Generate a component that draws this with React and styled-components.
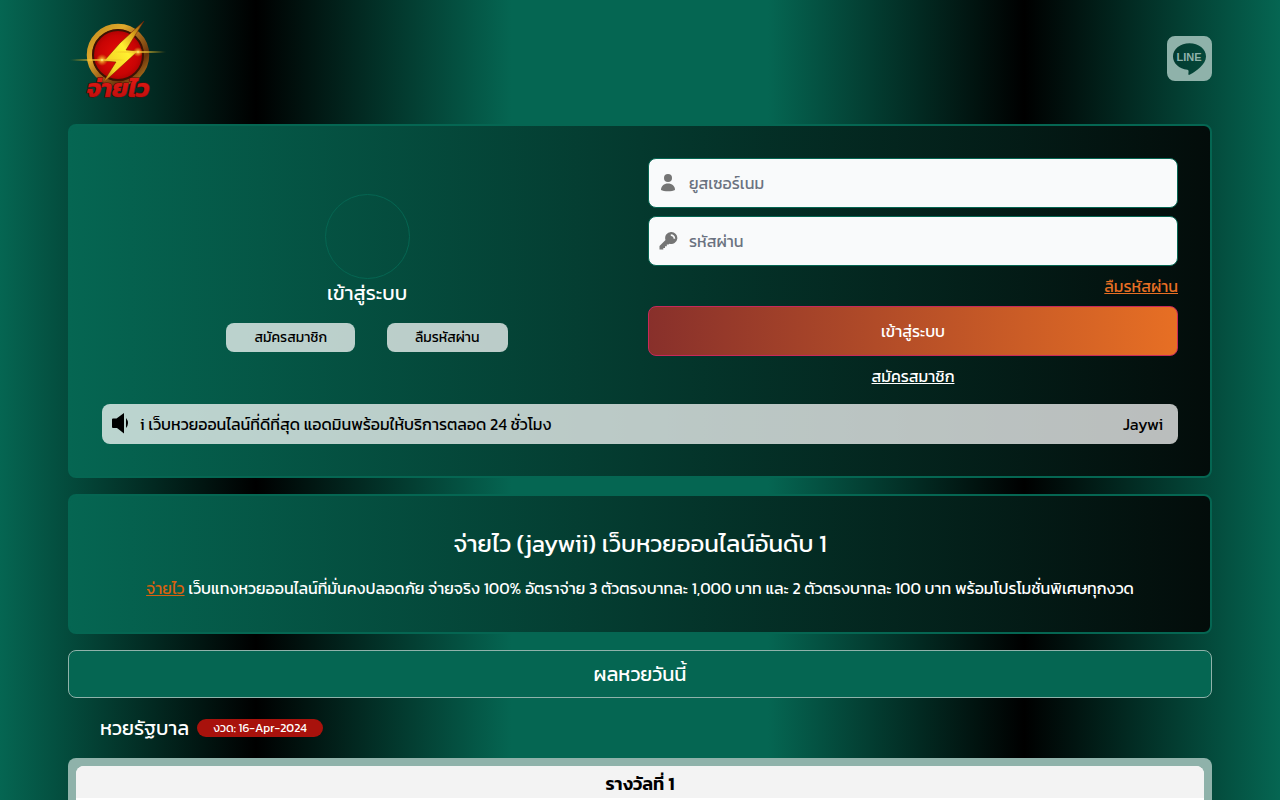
import styled, { createGlobalStyle } from "styled-components";

const GREEN = "#056652";

const App = () => {
  return (
    <>
      <GlobalStyle />
      <Container>
        <Header>
          <LogoLink href="#" aria-label="จ่ายไว">
            <Logo />
          </LogoLink>
          <LineLink href="#" aria-label="Line">
            <LineIcon />
          </LineLink>
        </Header>

        <Card>
          <LoginGrid>
            <Profile>
              <Avatar />
              <ProfileName>เข้าสู่ระบบ</ProfileName>
              <ProfileActions>
                <SmallButton type="button">สมัครสมาชิก</SmallButton>
                <SmallButton type="button">ลืมรหัสผ่าน</SmallButton>
              </ProfileActions>
            </Profile>

            <LoginForm onSubmit={(e) => e.preventDefault()}>
              <Field>
                <UserIcon />
                <Input
                  type="text"
                  aria-label="ยูสเซอร์เนม"
                  placeholder="ยูสเซอร์เนม"
                />
              </Field>
              <Field>
                <KeyIcon />
                <Input
                  type="password"
                  aria-label="รหัสผ่าน"
                  placeholder="รหัสผ่าน"
                />
              </Field>
              <ForgotLink href="#">ลืมรหัสผ่าน</ForgotLink>
              <SubmitButton type="submit">เข้าสู่ระบบ</SubmitButton>
              <RegisterLink href="#">สมัครสมาชิก</RegisterLink>
            </LoginForm>
          </LoginGrid>

          <NewsBar>
            <SpeakerIcon />
            <NewsText>
              <span>i เว็บหวยออนไลน์ที่ดีที่สุด แอดมินพร้อมให้บริการตลอด 24 ชั่วโมง</span>
              <span>Jaywi</span>
            </NewsText>
          </NewsBar>
        </Card>

        <Card>
          <IntroTitle>จ่ายไว (jaywii) เว็บหวยออนไลน์อันดับ 1</IntroTitle>
          <IntroText>
            <a href="#">จ่ายไว</a> เว็บแทงหวยออนไลน์ที่มั่นคงปลอดภัย จ่ายจริง 100%
            อัตราจ่าย 3 ตัวตรงบาทละ 1,000 บาท และ 2 ตัวตรงบาทละ 100 บาท
            พร้อมโปรโมชั่นพิเศษทุกงวด
          </IntroText>
        </Card>

        <ResultHeading>ผลหวยวันนี้</ResultHeading>
        <LottoHead>
          <LottoName>หวยรัฐบาล</LottoName>
          <DateBadge>งวด: 16-Apr-2024</DateBadge>
        </LottoHead>
        <ResultPanel>
          <ResultTable>
            <thead>
              <tr>
                <th scope="col">รางวัลที่ 1</th>
              </tr>
            </thead>
            <tbody>
              <tr>
                <td></td>
              </tr>
            </tbody>
          </ResultTable>
        </ResultPanel>
      </Container>
    </>
  );
};

const Logo = () => (
  <svg width="100" height="84" viewBox="0 -2 100 84" aria-hidden="true">
    <defs>
      <linearGradient id="ring" x1="0" y1="0" x2="1" y2="1">
        <stop offset="0" stopColor="#c08a1c" />
        <stop offset="0.3" stopColor="#e0aa2c" />
        <stop offset="0.5" stopColor="#a86c1c" />
        <stop offset="0.75" stopColor="#6a340c" />
        <stop offset="1" stopColor="#c98a20" />
      </linearGradient>
      <radialGradient id="disc">
        <stop offset="0" stopColor="#e80c08" />
        <stop offset="0.7" stopColor="#c80404" />
        <stop offset="1" stopColor="#9c0202" />
      </radialGradient>
      <linearGradient id="bolt" x1="1" y1="0" x2="0" y2="1">
        <stop offset="0" stopColor="#7a4a10" />
        <stop offset="0.25" stopColor="#e0a81c" />
        <stop offset="0.45" stopColor="#fff030" />
        <stop offset="0.75" stopColor="#f4d424" />
        <stop offset="1" stopColor="#a85c10" />
      </linearGradient>
      <radialGradient id="flare">
        <stop offset="0" stopColor="#fffbd0" />
        <stop offset="0.2" stopColor="#ffd840" stopOpacity="0.8" />
        <stop offset="1" stopColor="#e0a010" stopOpacity="0" />
      </radialGradient>
      <linearGradient id="word" x1="0" y1="0" x2="0" y2="1">
        <stop offset="0" stopColor="#f02018" />
        <stop offset="1" stopColor="#b00808" />
      </linearGradient>
    </defs>
    <circle cx="50" cy="37" r="28" fill="url(#disc)" />
    <circle cx="50" cy="37" r="28.500" fill="none" stroke="url(#ring)" strokeWidth="5.500" />
    <circle cx="50" cy="37" r="25" fill="none" stroke="#3c1404" strokeWidth="2" />
    <path
      d="M76 3L52 25L36 43L48 44L34 66L70 33L58 32Z"
      fill="url(#bolt)"
      stroke="#7a1804"
      strokeWidth="0.500"
    />
    <ellipse cx="30" cy="42" rx="30" ry="1.500" fill="url(#flare)" />
    <ellipse cx="72" cy="34" rx="28" ry="1.500" fill="url(#flare)" />
    <circle cx="34" cy="42" r="6" fill="url(#flare)" />
    <circle cx="70" cy="34" r="5" fill="url(#flare)" />
    <text
      x="50"
      y="79"
      textAnchor="middle"
      fontSize="25"
      fontWeight="700"
      fontStyle="italic"
      fill="url(#word)"
      stroke="#5a0404"
      strokeWidth="1"
      paintOrder="stroke"
    >
      จ่ายไว
    </text>
  </svg>
);

const LineIcon = () => (
  <svg width="45" height="45" viewBox="0 0 45 45" fill="#8fb2aa" aria-hidden="true">
    <path
      fillRule="evenodd"
      d="M8 0H37A8 8 0 0 1 45 8V37A8 8 0 0 1 37 45H8A8 8 0 0 1 0 37V8A8 8 0 0 1 8 0ZM22.500 7.300C13.400 7.300 6 13 6 20.500C6 27.300 12 32.800 20.500 33.800C21.800 34.200 21.700 35 21.400 37.500C21.200 39 21.800 39.200 23 38.600C29 35.300 39 28.500 39 20.500C39 13 31.600 7.300 22.500 7.300Z"
    />
    <LineWord x="22" y="25" textAnchor="middle">
      LINE
    </LineWord>
  </svg>
);

const UserIcon = () => (
  <FieldIcon viewBox="0 0 20 20" aria-hidden="true">
    <circle cx="10" cy="5" r="4" />
    <path d="M3 17c0-4 3-6.500 7-6.500s7 2.500 7 6.500c-1.500.8-4 1.300-7 1.300s-5.500-.5-7-1.300Z" />
  </FieldIcon>
);

const KeyIcon = () => (
  <FieldIcon viewBox="0 0 20 20" aria-hidden="true">
    <path
      fillRule="evenodd"
      d="M13 1a6 6 0 1 1-1.500 11.700L10.500 13.500H8.800V15.300H7V17H5.300V18.500H1.500V15L7.500 9A6 6 0 0 1 13 1Zm-.2 2.200v1.700a2.500 2.500 0 0 1 2.700 2.800h1.700c.1-2.700-1.800-4.500-4.400-4.500Z"
    />
  </FieldIcon>
);

const SpeakerIcon = () => (
  <SpeakerSvg viewBox="0 1 20 20" aria-hidden="true">
    <path d="M3 5.500H6.500L14 0V20.500L7 15H3Q2 15 2 14V6.500Q2 5.500 3 5.500Z" />
    <path d="M16 5Q20 10 16 15Z" />
  </SpeakerSvg>
);

const GlobalStyle = createGlobalStyle`
  * {
    box-sizing: border-box;
  }

  body {
    margin: 0;
    min-height: 100vh;
    overflow-x: hidden;
    color: #fff;
    font-family: Kanit, "Noto Sans Thai", "Noto Sans", sans-serif;
    font-size: 16px;
    line-height: 24px;
    background: linear-gradient(
      90deg,
      ${GREEN} 0%,
      #000 20%,
      ${GREEN} 40%,
      ${GREEN} 60%,
      #000 80%,
      ${GREEN} 100%
    );
  }

  button,
  input {
    font: inherit;
  }
`;

const Container = styled.main`
  width: calc(100% - 32px);
  max-width: 1144px;
  margin: 0 auto;
`;

const Header = styled.header`
  display: flex;
  align-items: center;
  justify-content: space-between;
  padding: 16px 0 24px;
`;

const LogoLink = styled.a`
  display: block;

  svg {
    display: block;
    overflow: visible;
  }
`;

const LineLink = styled.a`
  display: flex;
`;

const LineWord = styled.text`
  font-family: "Liberation Sans", Arial, sans-serif;
  font-size: 11px;
  font-weight: 700;
`;

const Card = styled.section`
  margin-bottom: 16px;
  padding: 32px;
  border: 2px solid ${GREEN};
  border-radius: 8px;
  background: linear-gradient(90deg, ${GREEN} 0%, #030c0a 100%) border-box;
`;

const LoginGrid = styled.div`
  display: grid;
  grid-template-columns: 1fr 1fr;
  gap: 16px;
`;

const Profile = styled.div`
  display: flex;
  flex-direction: column;
  align-items: center;
  justify-content: center;
`;

const Avatar = styled.div`
  width: 85px;
  height: 85px;
  border: 1px solid ${GREEN};
  border-radius: 50%;
`;

const ProfileName = styled.div`
  font-size: 20px;
  line-height: 28px;
`;

const ProfileActions = styled.div`
  display: flex;
  gap: 32px;
  margin-top: 16px;
`;

const SmallButton = styled.button`
  padding: 4px 28px;
  border: 0;
  border-radius: 8px;
  color: #000;
  background: rgba(255, 255, 255, 0.73);
  font-size: 14px;
  line-height: 21px;
`;

const LoginForm = styled.form`
  display: flex;
  flex-direction: column;
  gap: 8px;
`;

const Field = styled.div`
  display: flex;
  align-items: center;
  height: 50px;
  padding: 0 9px;
  border: 1px solid ${GREEN};
  border-radius: 8px;
  background: #f9fafb;
`;

const FieldIcon = styled.svg`
  flex: none;
  width: 20px;
  height: 20px;
  margin-right: 11px;
  fill: #757575;
`;

const Input = styled.input`
  flex: 1;
  min-width: 0;
  padding: 0;
  border: 0;
  outline: 0;
  color: #111827;
  background: transparent;

  &::placeholder {
    color: #6b7280;
    opacity: 1;
  }
`;

const ForgotLink = styled.a`
  align-self: flex-end;
  color: #e76f24;
`;

const SubmitButton = styled.button`
  height: 50px;
  border: 1px solid #c8285a;
  border-radius: 8px;
  color: #fff;
  background: linear-gradient(90deg, #88302b, #e76f24);
`;

const RegisterLink = styled.a`
  align-self: center;
  color: #fff;
`;

const NewsBar = styled.div`
  display: flex;
  align-items: center;
  height: 40px;
  margin-top: 16px;
  padding: 0 15px 0 8px;
  border-radius: 8px;
  color: #000;
  background: rgba(255, 255, 255, 0.73);
`;

const SpeakerSvg = styled.svg`
  flex: none;
  width: 20px;
  height: 20px;
  margin-right: 10px;
  overflow: visible;
`;

const NewsText = styled.div`
  display: flex;
  flex: 1;
  justify-content: space-between;
  overflow: hidden;
  white-space: nowrap;
`;

const IntroTitle = styled.h1`
  margin: 0 0 16px;
  font-size: 24px;
  font-weight: 400;
  line-height: 32px;
  text-align: center;
`;

const IntroText = styled.p`
  margin: 0;
  text-align: center;

  a {
    color: #d9610f;
  }
`;

const ResultHeading = styled.h2`
  margin: 0;
  padding: 9px;
  border: 1px solid #8fb2aa;
  border-radius: 8px;
  background: ${GREEN};
  font-size: 20px;
  font-weight: 400;
  line-height: 28px;
  text-align: center;
`;

const LottoHead = styled.div`
  display: flex;
  align-items: center;
  gap: 8px;
  padding: 16px 32px;
`;

const LottoName = styled.h3`
  margin: 0;
  font-size: 20px;
  font-weight: 400;
  line-height: 28px;
`;

const DateBadge = styled.span`
  padding: 0 16px;
  border-radius: 9px;
  background: #a8120c;
  font-size: 12px;
  line-height: 18px;
`;

const ResultPanel = styled.div`
  padding: 8px;
  border-radius: 8px;
  background: #8fb2aa;
`;

const ResultTable = styled.table`
  width: 100%;
  border-collapse: collapse;
  border-radius: 8px;
  overflow: hidden;
  color: #000;
  background: #fff;

  th {
    padding: 6px 4px 2px;
    background: #f3f3f3;
    font-size: 18px;
    font-weight: 600;
    line-height: 24px;
  }

  td {
    height: 48px;
  }
`;

export default App;
